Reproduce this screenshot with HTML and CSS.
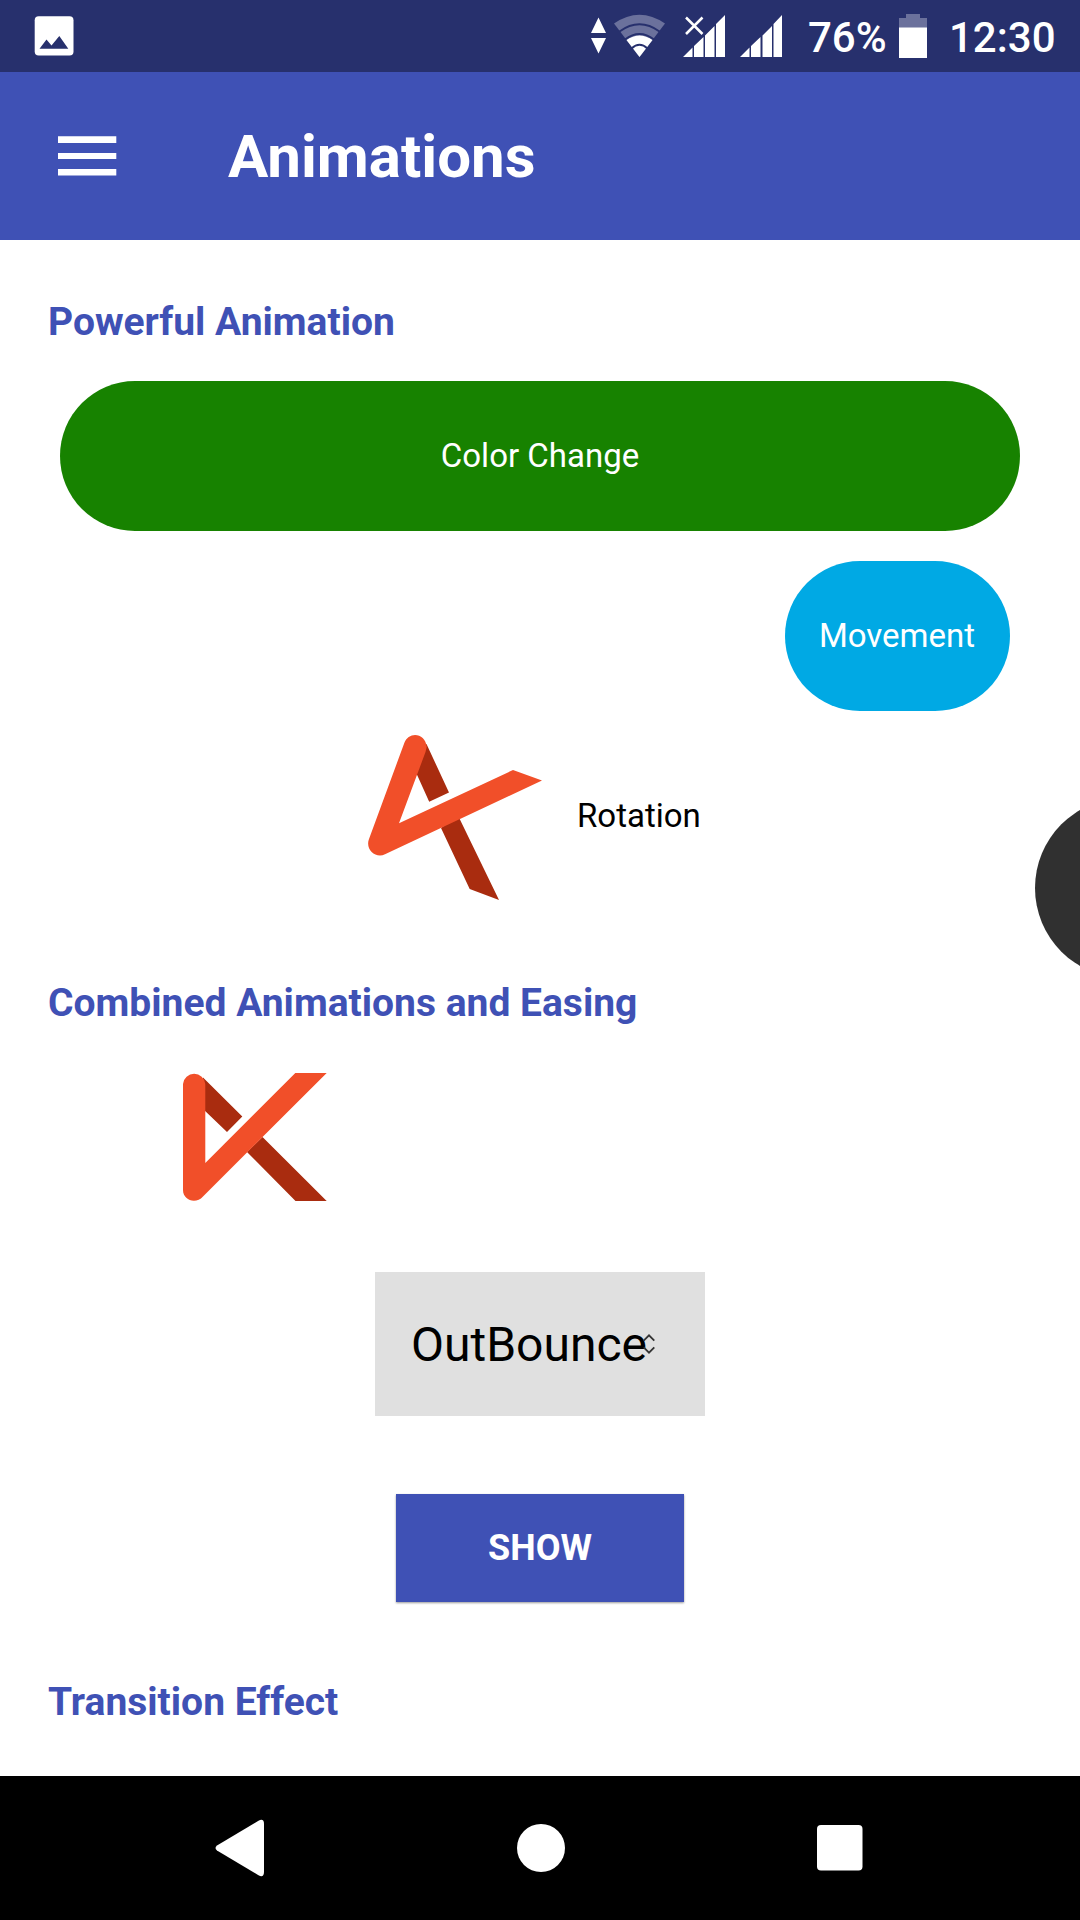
FILE: index.html
```html
<!DOCTYPE html>
<html lang="en">
<head>
<meta charset="utf-8">
<title>Animations</title>
<link rel="stylesheet" href="styles.css">
</head>
<body>
<div class="screen">
  <div class="status-bar">
    <svg class="photo-icon" width="40" height="40" viewBox="34 16 40 40">
      <rect x="34.7" y="16.3" width="38.8" height="39.2" rx="4" fill="#fff"/>
      <path d="M39.5 48.7L46.5 39.5L51.5 45.5L59.3 36L68.3 48.7Z" fill="#27306d"/>
    </svg>
    <svg class="signal-icons" width="200" height="72" viewBox="585 0 200 72" fill="#fff">
      <path d="M598.5 17.5L606 33H591ZM591 38H606L598.5 53.5Z"/>
      <path d="M614 23.500Q639.500 6 665 23.500L639.500 57Z" fill="#6b719c"/>
      <path d="M626.500 40Q639.500 31 652.500 40L639.500 57Z"/>
      <path d="M619.500 31.500Q639.500 17 659.500 31.500M625 39.500Q639.500 28.500 654 39.500M631.500 48.500Q639.500 41 647.500 48.500" fill="none" stroke="#27306d" stroke-width="2"/>
      <path d="M683 57L692.500 47.500V57ZM694 57V46L703.500 37V57ZM705 57V35.500L714.500 26V57ZM716 57V24L725 15V57Z"/>
      <path d="M686 17.500L702.500 34M702.500 17.500L686 34" stroke="#fff" stroke-width="2.500"/>
      <path d="M740 57L749.500 47.500V57ZM751 57V46L760.500 37V57ZM762.500 57V35.500L772 26V57ZM773.500 57V24L782 15V57Z"/>
    </svg>
    <span class="battery-text">76%</span>
    <svg class="battery-icon" width="28" height="44" viewBox="0 0 28 44">
      <path d="M0 4H7V0H21V4H28V14H0Z" fill="#6b719c"/>
      <path d="M0 13.500H28V44H0Z" fill="#fff"/>
    </svg>
    <span class="clock">12:30</span>
  </div>

  <header class="app-bar">
    <svg class="menu-icon" width="59" height="40" viewBox="0 0 59 40" fill="#fff">
      <path d="M0 .3H58.300V7H0ZM0 17H58.300V23H0ZM0 33H58.300V39.500H0Z"/>
    </svg>
    <h1 class="title">Animations</h1>
  </header>

  <main class="content">
    <h2 class="heading">Powerful Animation</h2>
    <div class="pill pill-color">Color Change</div>
    <div class="pill pill-move">Movement</div>
    <div class="rotation">
      <svg class="logo-rotated" width="175" height="168" viewBox="367 734 175 168">
        <path d="M426.500 744L449 792.500L429.200 801.700L409 757ZM441 828L458 815.500L499 900L469.700 889Z" fill="#a92c0f"/>
        <path d="M404.300 743C408.500 731 425.500 732.500 426.700 747L425.500 752L399 823.300L513 770L542 780.500L385 854.300C375.500 859 365 849 369 839Z" fill="#f14f29"/>
      </svg>
      <span class="rotation-label">Rotation</span>
    </div>

    <h2 class="heading heading-combined">Combined Animations and Easing</h2>
    <svg class="logo" width="145" height="129" viewBox="183 1072 145 129">
      <path d="M203 1077.500L242.300 1116.500L227 1132L203 1109ZM247 1152L262.500 1137L326.700 1201H295.500Z" fill="#a92c0f"/>
      <path d="M183 1084A11.200 11.200 0 0 1 205.300 1084V1163L295.300 1073H326.700L203 1196.500C196 1204.500 183 1200.500 183 1190Z" fill="#f14f29"/>
    </svg>
    <div class="select">
      <span>OutBounce</span>
      <svg class="chevrons" width="12" height="20" viewBox="0 0 12 20">
        <path d="M.7 6.700L6 1.300L11.300 6.700M.7 13.300L6 18.700L11.300 13.300" fill="none" stroke="#333" stroke-width="1.800"/>
      </svg>
    </div>
    <button class="show-button">SHOW</button>
    <h2 class="heading heading-transition">Transition Effect</h2>
    <div class="side-handle"></div>
  </main>

  <nav class="nav-bar">
    <svg width="50" height="60" viewBox="215 1818 50 60" fill="#fff">
      <path d="M217 1845.500L258.500 1820.700Q264 1818 264 1824V1872Q264 1878 258.500 1875.300L217 1850.500Q214 1848 217 1845.500Z"/>
    </svg>
    <svg width="48" height="48" viewBox="0 0 48 48"><circle cx="24" cy="24" r="24" fill="#fff"/></svg>
    <svg width="48" height="46" viewBox="0 0 48 46"><rect x="1" width="45.500" height="45.500" rx="4" fill="#fff"/></svg>
  </nav>
</div>
</body>
</html>
```
FILE: styles.css
```css
* {
  box-sizing: border-box;
}

body {
  margin: 0;
  background: #fff;
  font-family: Roboto, sans-serif;
}

svg {
  display: block;
  flex: none;
}

.screen {
  display: flex;
  flex-direction: column;
  width: 1080px;
  height: 1920px;
  overflow: hidden;
}

.status-bar {
  display: flex;
  flex: none;
  align-items: center;
  height: 72px;
  padding-left: 34px;
  background: #27306d;
  color: #fff;
  font-size: 42px;
  font-weight: 500;
  line-height: 72px;
}

.signal-icons {
  margin-left: 511px;
}

.battery-text {
  width: 91px;
  margin-left: 23px;
  padding-top: 3px;
}

.clock {
  margin-left: 22px;
  padding-top: 3px;
}

.app-bar {
  display: flex;
  flex: none;
  align-items: center;
  height: 168px;
  padding-left: 58px;
  background: #3f51b5;
  color: #fff;
}

.title {
  margin: 0 0 0 111px;
  padding-top: 2px;
  font-size: 60px;
  font-weight: 700;
  line-height: 70px;
}

.content {
  position: relative;
  display: flex;
  flex: none;
  flex-direction: column;
  height: 1536px;
  padding: 58px 48px 0;
}

.heading {
  margin: 0;
  color: #3f51b5;
  font-size: 39px;
  font-weight: 700;
  line-height: 48px;
}

.pill {
  display: flex;
  flex: none;
  align-items: center;
  justify-content: center;
  height: 150px;
  padding-bottom: 2px;
  border-radius: 75px;
  color: #fff;
  font-size: 33px;
}

.pill-color {
  margin: 35px 12px 0;
  background: #178200;
}

.pill-move {
  align-self: flex-end;
  width: 225px;
  margin: 30px 22.500px 0 0;
  background: #00a9e4;
}

.rotation {
  display: flex;
  align-items: center;
  margin: 23px 0 0 319px;
}

.rotation-label {
  margin-left: 35px;
  padding-bottom: 4px;
  font-size: 33px;
  line-height: 40px;
  color: #000;
}

.heading-combined {
  margin-top: 77px;
}

.logo {
  margin: 45px 0 0 135px;
}

.select {
  display: flex;
  flex: none;
  align-self: center;
  align-items: center;
  width: 330px;
  height: 144px;
  margin-top: 71px;
  padding-left: 36px;
  background: #e0e0e0;
  color: #000;
  font-size: 48px;
}

.chevrons {
  margin-left: -4px;
}

.show-button {
  flex: none;
  align-self: center;
  width: 288px;
  height: 108px;
  margin-top: 78px;
  padding: 0;
  border: 0;
  background: #3f51b5;
  box-shadow: 0 1px 2px rgba(0, 0, 0, 0.4);
  color: #fff;
  font: 700 36px Roboto, sans-serif;
}

.heading-transition {
  margin-top: 76px;
}

/* Floating handle that hangs over the right edge of the screen */
.side-handle {
  position: absolute;
  top: 558px;
  right: 0;
  width: 45px;
  height: 180px;
  overflow: hidden;
}

.side-handle::before {
  content: "";
  display: block;
  width: 180px;
  height: 180px;
  border-radius: 50%;
  background: #303030;
}

.nav-bar {
  display: flex;
  flex: none;
  align-items: center;
  justify-content: space-between;
  height: 144px;
  padding: 0 216px 0 215px;
  background: #000;
}
```
